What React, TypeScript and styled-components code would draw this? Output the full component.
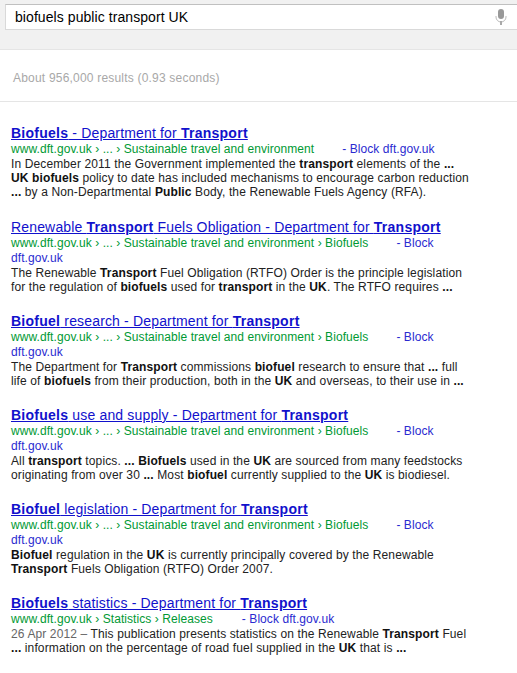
import { createGlobalStyle } from 'styled-components';
import styled from 'styled-components';

const GlobalStyle = createGlobalStyle`
  html, body {
    margin: 0;
    padding: 0;
    background: #fff;
    font-family: "Liberation Sans", Arial, sans-serif;
  }
`;

const SearchBar = styled.header`
  height: 50px;
  box-sizing: border-box;
  padding: 4px 0 0 5px;
  background: #f1f1f1;
  border-bottom: 1px solid #e5e5e5;
  overflow: hidden;
`;

const SearchBox = styled.div`
  height: 26px;
  box-sizing: border-box;
  margin-right: -4px;
  padding: 0 10px 0 9px;
  display: flex;
  align-items: center;
  justify-content: space-between;
  background: #fff;
  border: 1px solid #d9d9d9;
  border-top-color: #c0c0c0;
  font-size: 14px;
  letter-spacing: 0.07px;
  color: #000;
`;

const MicIcon = styled.svg`
  width: 12px;
  height: 16px;
  margin-right: 3px;
  flex: none;
`;

const Stats = styled.div`
  height: 52px;
  box-sizing: border-box;
  padding: 21px 0 0 13px;
  border-bottom: 1px solid #e5e5e5;
  font-size: 12px;
  line-height: 14px;
  letter-spacing: 0.2px;
  color: #a8a8a8;
`;

const Results = styled.main`
  padding: 22px 0 0 11px;
  width: 470px;
`;

const Result = styled.article`
  height: 94px;
`;

const Title = styled.a`
  display: block;
  font-size: 14px;
  line-height: 18px;
  letter-spacing: 0.16px;
  color: #1111cc;
  text-decoration: underline;
  white-space: nowrap;

  b {
    letter-spacing: 0.26px;
  }
`;

const Url = styled.div`
  font-size: 12px;
  line-height: 15px;
  letter-spacing: 0.07px;
  color: #009933;
`;

const BlockLink = styled.a<{ $gap: number }>`
  color: #2a2ad0;
  margin-left: ${(p) => p.$gap}px;
`;

const Snippet = styled.div`
  font-size: 12px;
  line-height: 14px;
  letter-spacing: 0.12px;
  color: #222;
  white-space: nowrap;

  b {
    color: #111;
  }
`;

const Age = styled.span`
  color: #666;
`;

const App: React.FC = () => {
  return (
    <>
      <GlobalStyle />
      <SearchBar>
        <SearchBox>
          <span>biofuels public transport UK</span>
          <MicIcon viewBox="0 0 12 16">
            <rect x="3" y="0" width="6" height="10" rx="3" fill="#999" />
            <path d="M1 7v1a5 5 0 0 0 10 0V7" fill="none" stroke="#bbb" strokeWidth="1" />
            <rect x="5" y="12" width="2" height="4" fill="#aaa" />
          </MicIcon>
        </SearchBox>
      </SearchBar>

      <Stats>About 956,000 results (0.93 seconds)</Stats>

      <Results>
        <Result>
          <Title><b>Biofuels</b> - Department for <b>Transport</b></Title>
          <Url>
            www.dft.gov.uk › ... › Sustainable travel and environment
            <BlockLink $gap={28}>- Block dft.gov.uk</BlockLink>
          </Url>
          <Snippet>
            In December 2011 the Government implemented the <b>transport</b> elements of the <b>...</b><br />
            <b>UK biofuels</b> policy to date has included mechanisms to encourage carbon reduction<br />
            <b>...</b> by a Non-Departmental <b>Public</b> Body, the Renewable Fuels Agency (RFA).
          </Snippet>
        </Result>

        <Result>
          <Title>Renewable <b>Transport</b> Fuels Obligation - Department for <b>Transport</b></Title>
          <Url>
            www.dft.gov.uk › ... › Sustainable travel and environment › Biofuels
            <BlockLink $gap={28}>- Block</BlockLink><br />
            <BlockLink $gap={0}>dft.gov.uk</BlockLink>
          </Url>
          <Snippet>
            The Renewable <b>Transport</b> Fuel Obligation (RTFO) Order is the principle legislation<br />
            for the regulation of <b>biofuels</b> used for <b>transport</b> in the <b>UK</b>. The RTFO requires <b>...</b>
          </Snippet>
        </Result>

        <Result>
          <Title><b>Biofuel</b> research - Department for <b>Transport</b></Title>
          <Url>
            www.dft.gov.uk › ... › Sustainable travel and environment › Biofuels
            <BlockLink $gap={28}>- Block</BlockLink><br />
            <BlockLink $gap={0}>dft.gov.uk</BlockLink>
          </Url>
          <Snippet>
            The Department for <b>Transport</b> commissions <b>biofuel</b> research to ensure that <b>...</b> full<br />
            life of <b>biofuels</b> from their production, both in the <b>UK</b> and overseas, to their use in <b>...</b>
          </Snippet>
        </Result>

        <Result>
          <Title><b>Biofuels</b> use and supply - Department for <b>Transport</b></Title>
          <Url>
            www.dft.gov.uk › ... › Sustainable travel and environment › Biofuels
            <BlockLink $gap={28}>- Block</BlockLink><br />
            <BlockLink $gap={0}>dft.gov.uk</BlockLink>
          </Url>
          <Snippet>
            All <b>transport</b> topics. <b>... Biofuels</b> used in the <b>UK</b> are sourced from many feedstocks<br />
            originating from over 30 <b>...</b> Most <b>biofuel</b> currently supplied to the <b>UK</b> is biodiesel.
          </Snippet>
        </Result>

        <Result>
          <Title><b>Biofuel</b> legislation - Department for <b>Transport</b></Title>
          <Url>
            www.dft.gov.uk › ... › Sustainable travel and environment › Biofuels
            <BlockLink $gap={28}>- Block</BlockLink><br />
            <BlockLink $gap={0}>dft.gov.uk</BlockLink>
          </Url>
          <Snippet>
            <b>Biofuel</b> regulation in the <b>UK</b> is currently principally covered by the Renewable<br />
            <b>Transport</b> Fuels Obligation (RTFO) Order 2007.
          </Snippet>
        </Result>

        <Result>
          <Title><b>Biofuels</b> statistics - Department for <b>Transport</b></Title>
          <Url>
            www.dft.gov.uk › Statistics › Releases
            <BlockLink $gap={29}>- Block dft.gov.uk</BlockLink>
          </Url>
          <Snippet>
            <Age>26 Apr 2012 – </Age>This publication presents statistics on the Renewable <b>Transport</b> Fuel<br />
            <b>...</b> information on the percentage of road fuel supplied in the <b>UK</b> that is <b>...</b>
          </Snippet>
        </Result>
      </Results>
    </>
  );
};

export default App;
